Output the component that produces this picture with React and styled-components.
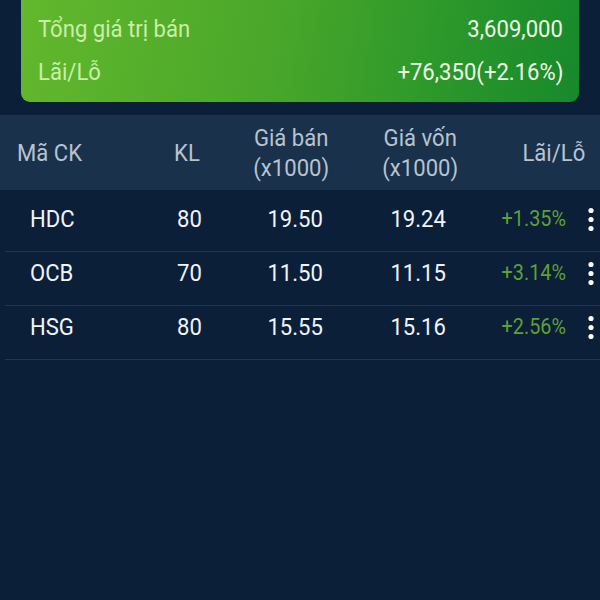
import React from "react";
import styled, { createGlobalStyle } from "styled-components";

const GlobalStyle = createGlobalStyle`
  html, body {
    margin: 0;
    padding: 0;
    background: #0b1f38;
  }
  body {
    font-family: Roboto, "Liberation Sans", sans-serif;
  }
`;

const Screen = styled.div`
  width: 600px;
  height: 600px;
  overflow: hidden;
  background: #0b1f38;
  display: flex;
  flex-direction: column;
`;

const CardWrap = styled.div`
  padding: 0 21px;
`;

const SummaryCard = styled.div`
  margin-top: -46px;
  padding: 10px 16px 9px 17px;
  border-radius: 9px;
  background: linear-gradient(100deg, #63b92d 0%, #4aa72a 45%, #2c982b 75%, #17892c 100%);
  display: flex;
  flex-direction: column;
`;

const SummaryRow = styled.div`
  display: flex;
  justify-content: space-between;
  align-items: center;
  height: 43px;
  font-size: 24px;
`;

/* narrow the glyphs to imitate the condensed face of the reference */
const Narrow = styled.span`
  display: inline-block;
  transform: scaleX(0.92);
  transform-origin: ${(p) => p.$origin || "center"};
  color: ${(p) => p.$color || "inherit"};
  font-size: ${(p) => p.$size || "inherit"};
  white-space: nowrap;
`;

const HeaderBand = styled.div`
  margin-top: 13px;
  height: 75px;
  background: #1a314b;
  display: grid;
  grid-template-columns: 140px 94px 114px 144px 1fr 15px;
  align-items: center;
  color: #b7c3cf;
  font-size: 24px;
  line-height: 30px;
`;

const HeadCell = styled.div`
  text-align: ${(p) => p.$align || "center"};
  padding-left: ${(p) => p.$pl || 0}px;
`;

const Body = styled.div`
  padding: 8px 0 0 5px;
  display: flex;
  flex-direction: column;
`;

const Row = styled.div`
  display: grid;
  grid-template-columns: 135px 98px 114px 132px 1fr 34px;
  align-items: center;
  padding: 8px 0 19px;
  line-height: 26px;
  font-size: 24px;
  color: #f1f4f8;
  border-bottom: 1px solid #1f3751;
`;

const justify = { left: "flex-start", center: "center", right: "flex-end" };

const Cell = styled.div`
  display: flex;
  align-items: center;
  height: 26px;
  justify-content: ${(p) => justify[p.$align || "center"]};
  padding-left: ${(p) => p.$pl || 0}px;
`;

const MenuButton = styled.div`
  display: flex;
  justify-content: flex-end;
  align-items: center;
  padding-right: 6px;
  height: 26px;
`;

const Dots = () => (
  <svg width="6" height="24" viewBox="0 0 6 24">
    <circle cx="3" cy="3.5" r="2.6" fill="#ffffff" />
    <circle cx="3" cy="12.5" r="2.6" fill="#ffffff" />
    <circle cx="3" cy="21.5" r="2.6" fill="#ffffff" />
  </svg>
);

const summary = [
  { label: "Tổng giá vốn", value: "3,532,650" },
  { label: "Tổng giá trị bán", value: "3,609,000" },
  { label: "Lãi/Lỗ", value: "+76,350(+2.16%)" },
];

const rows = [
  { code: "HDC", kl: "80", sell: "19.50", cost: "19.24", pl: "+1.35%" },
  { code: "OCB", kl: "70", sell: "11.50", cost: "11.15", pl: "+3.14%" },
  { code: "HSG", kl: "80", sell: "15.55", cost: "15.16", pl: "+2.56%" },
];

export default function App() {
  return (
    <Screen>
      <GlobalStyle />
      <CardWrap>
        <SummaryCard>
          {summary.map((s) => (
            <SummaryRow key={s.label}>
              <Narrow $origin="left" $color="#c9efa6">{s.label}</Narrow>
              <Narrow $origin="right" $color="#eef8e6">{s.value}</Narrow>
            </SummaryRow>
          ))}
        </SummaryCard>
      </CardWrap>
      <HeaderBand>
        <HeadCell $align="left" $pl={17}>
          <Narrow $origin="left">Mã CK</Narrow>
        </HeadCell>
        <HeadCell>
          <Narrow>KL</Narrow>
        </HeadCell>
        <HeadCell>
          <Narrow>
            Giá bán
            <br />
            (x1000)
          </Narrow>
        </HeadCell>
        <HeadCell>
          <Narrow>
            Giá vốn
            <br />
            (x1000)
          </Narrow>
        </HeadCell>
        <HeadCell $align="right">
          <Narrow $origin="right">Lãi/Lỗ</Narrow>
        </HeadCell>
        <div />
      </HeaderBand>
      <Body>
        {rows.map((r) => (
          <Row key={r.code}>
            <Cell $align="left" $pl={25}>
              <Narrow $origin="left">{r.code}</Narrow>
            </Cell>
            <Cell>
              <Narrow>{r.kl}</Narrow>
            </Cell>
            <Cell>
              <Narrow>{r.sell}</Narrow>
            </Cell>
            <Cell>
              <Narrow>{r.cost}</Narrow>
            </Cell>
            <Cell $align="right">
              <Narrow $origin="right" $color="#5f9f35" $size="21.5px">
                {r.pl}
              </Narrow>
            </Cell>
            <MenuButton>
              <Dots />
            </MenuButton>
          </Row>
        ))}
      </Body>
    </Screen>
  );
}
